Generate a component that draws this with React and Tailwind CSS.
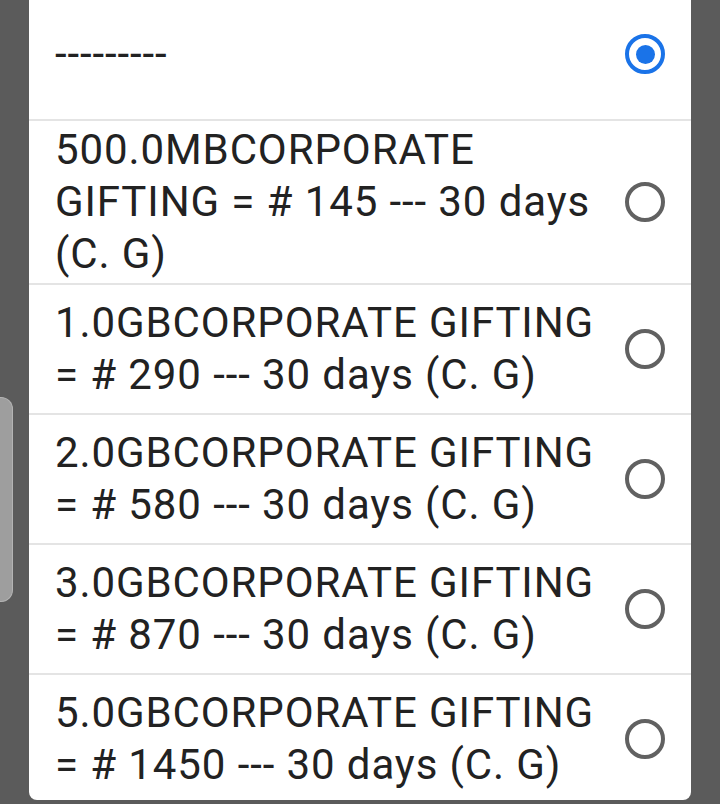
const options = [
  { label: '---------', selected: true },
  { label: '500.0MBCORPORATE GIFTING = # 145 --- 30 days (C. G)' },
  { label: '1.0GBCORPORATE GIFTING = # 290 --- 30 days (C. G)' },
  { label: '2.0GBCORPORATE GIFTING = # 580 --- 30 days (C. G)' },
  { label: '3.0GBCORPORATE GIFTING = # 870 --- 30 days (C. G)' },
  { label: '5.0GBCORPORATE GIFTING = # 1450 --- 30 days (C. G)' },
];

function Radio({ checked }) {
  if (checked) {
    return (
      <span className="flex h-10 w-10 shrink-0 items-center justify-center rounded-full border-4 border-[#1a73e8]">
        <span className="h-[19px] w-[19px] rounded-full bg-[#1a73e8]" />
      </span>
    );
  }
  return <span className="h-10 w-10 shrink-0 rounded-full border-4 border-[#616161]" />;
}

export default function App() {
  return (
    <div className="relative h-[804px] w-[720px] overflow-hidden bg-[#5b5b5b] font-['Roboto',sans-serif]">
      {/* side handle from the page behind */}
      <div className="absolute left-0 top-[397px] h-[205px] w-[13px] rounded-r-xl border border-l-0 border-[#b4b4b4] bg-[#9e9e9e]" />

      <div className="mx-auto h-[800px] w-[662px] overflow-hidden rounded-b-lg bg-white">
        <ul>
          {options.map((opt, i) => (
            <li
              key={i}
              className={
                'flex items-center gap-4 border-b-2 border-[#e4e4e4] px-[26px] ' +
                (i === 0 ? 'h-[121px] pb-[11px]' : 'min-h-[130px] py-[3px]')
              }
            >
              <span className="flex-1 text-[42px] leading-[52px] tracking-[0.9px] text-[#222222]">{opt.label}</span>
              <Radio checked={opt.selected} />
            </li>
          ))}
        </ul>
      </div>
    </div>
  );
}
